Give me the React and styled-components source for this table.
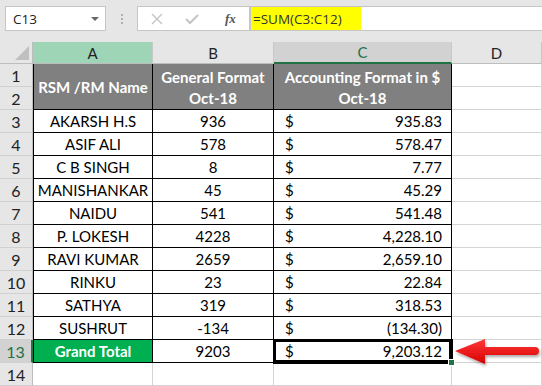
import React from 'react'
import styled, { createGlobalStyle } from 'styled-components'

const Global = createGlobalStyle`
    html, body {
        margin: 0;
        padding: 0;
        background: #ffffff;
    }
    body {
        width: 542px;
        height: 386px;
        overflow: hidden;
    }
`

const Page = styled.div`
    position: relative;
    width: 542px;
    height: 386px;
    overflow: hidden;
    background: #fff;
    font-family: Lato, "Liberation Sans", sans-serif;
`

const FormulaBar = styled.div`
    height: 42px;
    background: #e6e6e6;
    display: flex;
    align-items: flex-start;
    padding-top: 6px;
    box-sizing: border-box;
`
const NameBox = styled.div`
    margin-left: 5px;
    width: 101px;
    height: 25px;
    box-sizing: border-box;
    background: #fff;
    border: 1px solid #c6c6c6;
    display: flex;
    align-items: center;
    justify-content: space-between;
    padding: 0 6px 0 7px;
    font-family: "Open Sans", sans-serif;
    font-size: 13.5px;
    color: #222;
`
const Caret = styled.span`
    width: 0;
    height: 0;
    border-left: 4px solid transparent;
    border-right: 4px solid transparent;
    border-top: 4px solid #666;
`
const Grip = styled.div`
    width: 31px;
    height: 25px;
    display: flex;
    flex-direction: column;
    align-items: center;
    justify-content: center;
    gap: 2px;
    span {
        width: 2px;
        height: 2px;
        background: #b0b0b0;
    }
`
const FxBox = styled.div`
    width: 113px;
    height: 25px;
    box-sizing: border-box;
    background: #fff;
    border: 1px solid #c6c6c6;
    display: flex;
    align-items: center;
    padding: 0 0 0 13px;
    gap: 22px;
`
const Fx = styled.span`
    font-family: "Liberation Serif", serif;
    font-style: italic;
    font-weight: bold;
    font-size: 13px;
    color: #555;
    margin-left: 4px;
`
const Input = styled.div`
    flex: 1;
    height: 25px;
    box-sizing: border-box;
    background: #fff;
    border-top: 1px solid #c6c6c6;
    border-bottom: 1px solid #c6c6c6;
    border-left: 1px solid #c6c6c6;
    display: flex;
`
const Highlight = styled.div`
    width: 108px;
    background: #ffff00;
    display: flex;
    align-items: center;
    padding-left: 2px;
    font-family: "Open Sans", sans-serif;
    font-size: 13.5px;
    color: #333;
`

const Sheet = styled.div`
    display: grid;
    grid-template-columns: 33px 120px 121px 178px 90px;
    grid-template-rows: 22px repeat(14, 23px);
`

const ColHead = styled.div`
    box-sizing: border-box;
    background: ${p => p.$bg || '#e6e6e6'};
    color: ${p => p.$color || '#222'};
    border-right: 1px solid #c8c8c8;
    border-bottom: ${p => p.$active ? '2px solid #217346' : '1px solid #bdbdbd'};
    display: flex;
    align-items: center;
    justify-content: center;
    font-size: 15px;
`
const Corner = styled.div`
    box-sizing: border-box;
    background: #e6e6e6;
    border-right: 1px solid #bdbdbd;
    border-bottom: 1px solid #bdbdbd;
    position: relative;
    &::after {
        content: '';
        position: absolute;
        right: 3px;
        bottom: 3px;
        border-left: 14px solid transparent;
        border-bottom: 14px solid #c0c0c0;
    }
`
const RowHead = styled.div`
    box-sizing: border-box;
    background: ${p => p.$active ? '#d2d2d2' : '#e6e6e6'};
    color: ${p => p.$active ? '#217346' : '#222'};
    border-right: ${p => p.$active ? '2px solid #217346' : '1px solid #bdbdbd'};
    border-bottom: 1px solid #d0d0d0;
    display: flex;
    align-items: center;
    justify-content: center;
    font-size: 16px;
`
const Cell = styled.div`
    box-sizing: border-box;
    border-right: 1px solid ${p => p.$edge ? '#000' : '#d4d4d4'};
    border-bottom: 1px solid ${p => p.$edge ? '#000' : '#d4d4d4'};
    border-left: ${p => p.$first ? '1px solid #000' : 'none'};
    background: ${p => p.$fill || '#fff'};
    color: ${p => p.$fill ? '#fff' : '#000'};
    font-weight: ${p => p.$fill ? 'bold' : 'normal'};
    display: flex;
    align-items: center;
    justify-content: center;
    font-size: 15px;
    white-space: nowrap;
    grid-row: ${p => p.$span ? 'span 2' : 'auto'};
`
const Head = styled(Cell)`
    border-bottom: ${p => p.$top ? 'none' : '1px solid #000'};
    padding-top: ${p => p.$top ? '2px' : '0'};
`
const Money = styled.div`
    box-sizing: border-box;
    border-right: 1px solid #000;
    border-bottom: 1px solid #000;
    display: flex;
    align-items: center;
    justify-content: space-between;
    padding: 0 9px 0 11px;
    font-size: 15px;
    position: relative;
    box-shadow: ${p => p.$selected ? 'inset 0 0 0 2px #000, 0 0 0 1px #000' : 'none'};
`
const Handle = styled.span`
    position: absolute;
    right: -4px;
    bottom: -4px;
    width: 5px;
    height: 5px;
    background: #217346;
    border: 1px solid #fff;
`

const Arrow = styled.svg`
    position: absolute;
    left: 452px;
    top: 336px;
`

const rows = [
    ['AKARSH H.S', '936', '935.83'],
    ['ASIF ALI', '578', '578.47'],
    ['C B SINGH', '8', '7.77'],
    ['MANISHANKAR', '45', '45.29'],
    ['NAIDU', '541', '541.48'],
    ['P. LOKESH', '4228', '4,228.10'],
    ['RAVI KUMAR', '2659', '2,659.10'],
    ['RINKU', '23', '22.84'],
    ['SATHYA', '319', '318.53'],
    ['SUSHRUT', '-134', '(134.30)'],
]

const App = () => {
    return (
        <Page>
            <Global />
            <FormulaBar>
                <NameBox>C13<Caret /></NameBox>
                <Grip><span /><span /><span /></Grip>
                <FxBox>
                    <svg width="12" height="12" viewBox="0 0 12 12">
                        <path d="M1 1 L11 11 M11 1 L1 11" stroke="#c4c4c4" strokeWidth="1.4" />
                    </svg>
                    <svg width="14" height="12" viewBox="0 0 14 12">
                        <path d="M1 6 L5 10 L13 2" stroke="#c4c4c4" strokeWidth="2" fill="none" />
                    </svg>
                    <Fx>fx</Fx>
                </FxBox>
                <Input>
                    <Highlight>=SUM(C3:C12)</Highlight>
                </Input>
            </FormulaBar>

            <Sheet>
                <Corner />
                <ColHead $bg="#9fd5b7">A</ColHead>
                <ColHead>B</ColHead>
                <ColHead $bg="#d2d2d2" $color="#217346" $active>C</ColHead>
                <ColHead>D</ColHead>

                <RowHead>1</RowHead>
                <Head $fill="#808080" $edge $span $first>RSM /RM Name</Head>
                <Head $fill="#808080" $edge $top>General Format</Head>
                <Head $fill="#808080" $edge $top>Accounting Format in $</Head>
                <Cell />

                <RowHead>2</RowHead>
                <Head $fill="#808080" $edge>Oct-18</Head>
                <Head $fill="#808080" $edge>Oct-18</Head>
                <Cell />

                {rows.map((r, i) => (
                    <React.Fragment key={r[0]}>
                        <RowHead>{i + 3}</RowHead>
                        <Cell $edge $first>{r[0]}</Cell>
                        <Cell $edge>{r[1]}</Cell>
                        <Money><span>$</span><span>{r[2]}</span></Money>
                        <Cell />
                    </React.Fragment>
                ))}

                <RowHead $active>13</RowHead>
                <Cell $edge $first $fill="#00b050">Grand Total</Cell>
                <Cell $edge>9203</Cell>
                <Money $selected><span>$</span><span>9,203.12</span><Handle /></Money>
                <Cell />

                <RowHead>14</RowHead>
                <Cell />
                <Cell />
                <Cell />
                <Cell />
            </Sheet>

            <Arrow width="90" height="34" viewBox="0 0 90 34">
                <defs>
                    <linearGradient id="red" x1="0" y1="0" x2="0" y2="1">
                        <stop offset="0" stopColor="#ff3a3a" />
                        <stop offset="1" stopColor="#d80000" />
                    </linearGradient>
                    <filter id="sh" x="-20%" y="-30%" width="140%" height="160%">
                        <feDropShadow dx="1" dy="2" stdDeviation="1.5" floodColor="#000" floodOpacity="0.35" />
                    </filter>
                </defs>
                <path
                    d="M3 15 L33 3 L33 11 L83 11 A4 4 0 0 1 83 19 L33 19 L33 28 Z"
                    fill="url(#red)"
                    filter="url(#sh)"
                />
            </Arrow>
        </Page>
    )
}

export default App
